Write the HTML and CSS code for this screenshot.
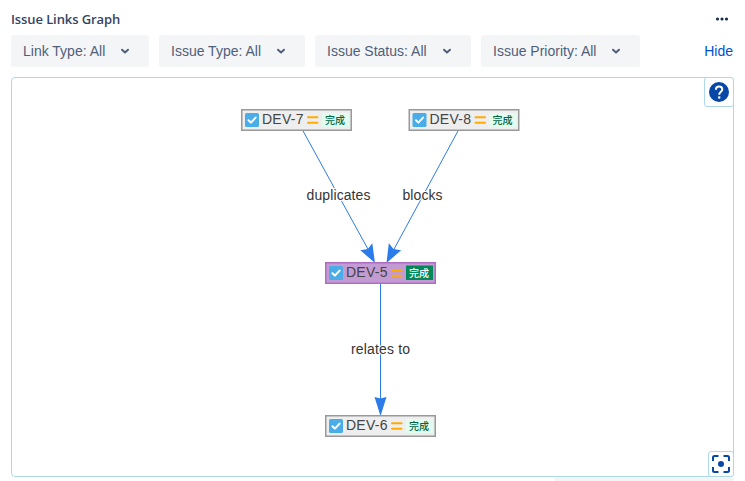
FILE: index.html
```html
<!DOCTYPE html>
<html lang="en">
<head>
<meta charset="utf-8">
<title>Issue Links Graph</title>
<link rel="stylesheet" href="styles.css">
</head>
<body>
<main class="page">
  <header class="header">
    <h2 class="title">Issue Links Graph</h2>
    <svg class="more" width="14" height="4" viewBox="0 0 14 4"><circle cx="2.5" cy="2" r="1.55"/><circle cx="7" cy="2" r="1.55"/><circle cx="11.5" cy="2" r="1.55"/></svg>
  </header>
  <div class="toolbar">
    <button class="filter link-type">Link Type: All<svg class="chevron" viewBox="0 0 10 6"><path d="M2 1.7 5 4.4 8 1.7"/></svg></button>
    <button class="filter issue-type">Issue Type: All<svg class="chevron" viewBox="0 0 10 6"><path d="M2 1.7 5 4.4 8 1.7"/></svg></button>
    <button class="filter status">Issue Status: All<svg class="chevron" viewBox="0 0 10 6"><path d="M2 1.7 5 4.4 8 1.7"/></svg></button>
    <button class="filter priority">Issue Priority: All<svg class="chevron" viewBox="0 0 10 6"><path d="M2 1.7 5 4.4 8 1.7"/></svg></button>
    <a class="hide">Hide</a>
  </div>
  <section class="panel">
    <svg class="graph" width="721" height="398" viewBox="12 78 721 398">
      <defs>
        <g id="task">
          <rect x="4" y="4" width="14" height="14" rx="1.5" fill="#4bade8"/>
          <path d="M7.500 11.300 9.900 13.600 14.600 8.600" fill="none" stroke="#fff" stroke-width="2" stroke-linecap="round" stroke-linejoin="round"/>
        </g>
        <path id="medium" d="M67 8.300h9.500M67 13.800h9.500" stroke="#ffab00" stroke-width="2" stroke-linecap="round"/>
      </defs>
      <g class="edges">
        <path d="M302.500 130 369 251M458.500 130 393 251M380.500 283V400"/>
        <path class="arrow" d="M375 263 360.300 250.200 367.800 249 372.300 243.200ZM386.500 263 388.800 243.200 393.500 249 401.200 250.200ZM380.500 416 374.500 397 380.500 398.500 386.500 397Z"/>
      </g>
      <text class="label" x="338.500" y="200" textLength="64">duplicates</text>
      <text class="label" x="422.500" y="200" textLength="40">blocks</text>
      <text class="label" x="380.500" y="354" textLength="59">relates to</text>
      <g class="node" transform="translate(241 109)">
        <rect class="box" x=".75" y=".75" width="109.500" height="20.500"/><use href="#task"/>
        <text class="key" x="21" y="15" textLength="41.500">DEV-7</text><use href="#medium"/>
        <rect class="badge" x="81" y="4" width="27" height="14"/><text class="state" x="94" y="14.500">完成</text>
      </g>
      <g class="node" transform="translate(408.500 109)">
        <rect class="box" x=".75" y=".75" width="109.500" height="20.500"/><use href="#task"/>
        <text class="key" x="21" y="15" textLength="41.500">DEV-8</text><use href="#medium"/>
        <rect class="badge" x="81" y="4" width="27" height="14"/><text class="state" x="94" y="14.500">完成</text>
      </g>
      <g class="node current" transform="translate(325 262)">
        <rect class="box" x=".75" y=".75" width="109.500" height="20.500"/><use href="#task"/>
        <text class="key" x="21" y="15" textLength="41.500">DEV-5</text><use href="#medium"/>
        <rect class="badge" x="81" y="3.500" width="27" height="14.500"/><text class="state" x="94" y="14.500">完成</text>
      </g>
      <g class="node" transform="translate(325 415)">
        <rect class="box" x=".75" y=".75" width="109.500" height="20.500"/><use href="#task"/>
        <text class="key" x="21" y="15" textLength="41.500">DEV-6</text><use href="#medium"/>
        <rect class="badge" x="81" y="4" width="27" height="14"/><text class="state" x="94" y="14.500">完成</text>
      </g>
    </svg>
    <button class="tool help"><svg width="20" height="20" viewBox="0 0 20 20"><circle cx="10" cy="10" r="10" fill="#0747a6"/><path d="M6.900 7.700C6.900 5.700 8.200 4.600 10.100 4.600s3.200 1.200 3.200 2.900c0 2.300-3.100 2.400-3.100 5.200" fill="none" stroke="#fff" stroke-width="2"/><rect x="9.100" y="14.400" width="2.200" height="2.200" fill="#fff"/></svg></button>
    <button class="tool fit"><svg width="18" height="18" viewBox="0 0 18 18"><path d="M1 6V2.500Q1 1 2.500 1H6.500M11.500 1H15.500Q17 1 17 2.500V6M17 12V15.500Q17 17 15.500 17H11.500M6.500 17H2.500Q1 17 1 15.500V12" fill="none" stroke="#0747a6" stroke-width="2"/><circle cx="9" cy="9" r="3" fill="#0747a6"/></svg></button>
  </section>
  <div class="next-bar"></div>
</main>
</body>
</html>
```
FILE: styles.css
```css
* { box-sizing: border-box; }
body { margin: 0; background: #fff; font-family: "Liberation Sans", Arial, sans-serif; }
.page { height: 481px; padding: 0 11px; overflow: hidden; display: flex; flex-direction: column; }
.header { height: 35px; flex: none; display: flex; justify-content: space-between; align-items: center; padding: 3px 5px 0 0; }
.title { margin: 0; font: 600 13px/20px "Open Sans", "Noto Sans", sans-serif; letter-spacing: -0.1px; color: #344563; }
.more { fill: #172b4d; }
.toolbar { height: 32px; flex: none; display: flex; gap: 10px; align-items: center; }
.filter { height: 32px; border: 0; border-radius: 3px; background: #f4f5f7; color: #505f79; font: 14px/32px "Liberation Sans", Arial, sans-serif; padding: 0 19px 0 12px; display: flex; justify-content: space-between; align-items: center; white-space: nowrap; }
.link-type { width: 138px; }
.issue-type { width: 146px; }
.status { width: 156px; }
.priority { width: 159px; }
.chevron { width: 10px; height: 6px; fill: none; stroke: #505f79; stroke-width: 2; stroke-linecap: round; stroke-linejoin: round; }
.hide { margin-left: auto; padding-right: 1px; color: #0052cc; font-size: 14px; }
.panel { position: relative; width: 723px; height: 400px; flex: none; margin-top: 10px; border: 1px solid #add8e6; border-radius: 4px; }
.graph { display: block; }
.edges { fill: none; stroke: #2b7ce9; stroke-width: 1; }
.edges .arrow { fill: #2b7ce9; stroke: none; }
.label { font-size: 14px; fill: #343434; stroke: #fff; stroke-width: 2px; paint-order: stroke; text-anchor: middle; }
.box { fill: #eee; stroke: #999; stroke-width: 1.5; }
.key { font-size: 14px; fill: #444; }
.badge { fill: #e3fcef; }
.state { font: 500 10px "Noto Sans CJK SC", sans-serif; fill: #006644; text-anchor: middle; }
.current .box { fill: #c39bd3; stroke: #ae6cc2; }
.current .badge { fill: #00875a; }
.current .state { fill: #fff; }
.tool { position: absolute; display: flex; align-items: center; justify-content: center; padding: 0; background: #fff; border: 1px solid #add8e6; border-radius: 3px; }
.help { top: -1px; right: -1px; width: 30px; height: 30px; }
.fit { right: -1px; bottom: -1px; width: 26px; height: 26px; }
.next-bar { width: 180px; height: 32px; flex: none; align-self: flex-end; margin-right: 0; background: #f4f5f7; border-radius: 3px; }
```
